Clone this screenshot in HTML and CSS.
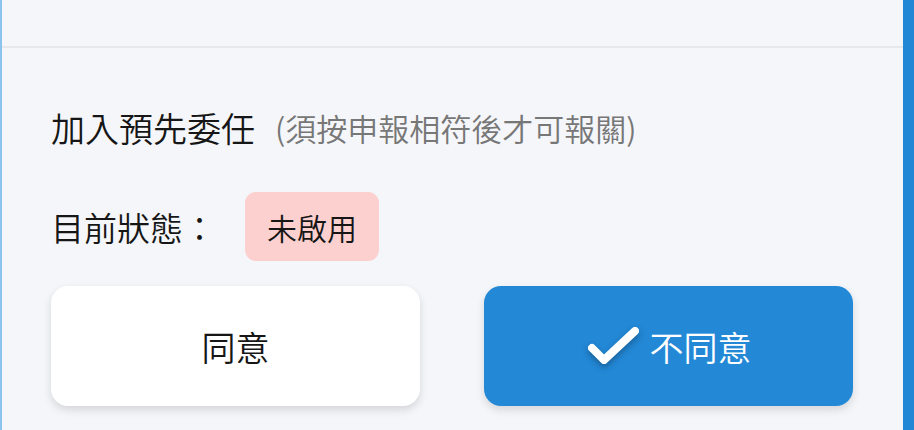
FILE: index.html
```html
<!DOCTYPE html>
<html lang="zh-Hant">
<head>
  <meta charset="UTF-8">
  <meta name="viewport" content="width=device-width, initial-scale=1.0">
  <link rel="stylesheet" href="styles.css">
  <title>預先委任</title>
</head>
<body>
  <div class="frame">
    <div class="topbar"></div>

    <div class="content">
      <div class="title-row">
        <span class="title">加入預先委任</span>
        <span class="hint">(須按申報相符後才可報關)</span>
      </div>

      <div class="status-row">
        <span class="status-label">目前狀態：</span>
        <span class="badge">未啟用</span>
      </div>

      <div class="actions">
        <button class="btn btn-light" type="button">同意</button>
        <button class="btn btn-blue" type="button">
          <svg class="check" width="56" height="42" viewBox="0 0 56 42">
            <polyline points="6,23 18,35 49,6" fill="none" stroke="#fff" stroke-width="8" stroke-linecap="round" stroke-linejoin="round"/>
          </svg>
          不同意
        </button>
      </div>
    </div>
  </div>
</body>
</html>
```

FILE: styles.css
```css
html, body {
  margin: 0;
  padding: 0;
}
body {
  font-family: "Noto Sans CJK TC", "Noto Sans", sans-serif;
  font-weight: 350;
  background: #f5f6fa;
  color: #161616;
}
.frame {
  height: 430px;
  border-left: 2px solid #8cc4ee;
  border-right: 11px solid #2288d6;
  background: #f5f6fa;
  box-sizing: border-box;
}
.topbar {
  height: 46px;
  border-bottom: 2px solid #e6e8ed;
}
.content {
  padding: 58px 49px 0 49px;
}
.title-row {
  display: flex;
  align-items: center;
  height: 44px;
}
.title {
  font-size: 34px;
  line-height: 44px;
}
.hint {
  font-size: 31px;
  line-height: 44px;
  color: #777;
  margin-left: 20px;
}
.status-row {
  display: flex;
  align-items: center;
  margin-top: 42px;
  height: 69px;
}
.status-label {
  font-size: 33px;
  line-height: 44px;
}
.badge {
  margin-left: 29px;
  height: 69px;
  padding: 0 22px;
  display: flex;
  align-items: center;
  background: #fdd0d0;
  border-radius: 11px;
  font-size: 30px;
}
.actions {
  display: flex;
  gap: 64px;
  margin-top: 25px;
}
.btn {
  width: 369px;
  height: 120px;
  border: none;
  border-radius: 17px;
  font-family: inherit;
  font-weight: 350;
  font-size: 34px;
  display: flex;
  align-items: center;
  justify-content: center;
  box-shadow: 0 4px 8px rgba(0, 0, 0, 0.13);
  cursor: pointer;
}
.btn-light {
  background: #fff;
  color: #161616;
}
.btn-blue {
  background: #2388d6;
  color: #fff;
  gap: 8px;
}
.check {
  filter: drop-shadow(0 3px 3px rgba(0, 0, 0, 0.3));
}
```
